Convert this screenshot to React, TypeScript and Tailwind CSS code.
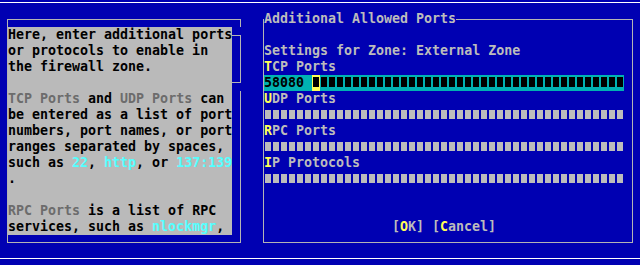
import React from 'react';

const FIELD_CELLS = 45;

const Gray: React.FC<{ children: React.ReactNode }> = ({ children }) => (
  <span className="text-[#6c6c6c]">{children}</span>
);

const Cyan: React.FC<{ children: React.ReactNode }> = ({ children }) => (
  <span className="text-[#55ffff]">{children}</span>
);

const Hot: React.FC<{ children: React.ReactNode }> = ({ children }) => (
  <span className="text-[#ffff55]">{children}</span>
);

const Row: React.FC<{ children?: React.ReactNode; className?: string }> = ({ children, className = '' }) => (
  <div className={`h-4 leading-4 whitespace-pre ${className}`}>{children}</div>
);

// empty input line drawn as a strip of small gray blocks
const EmptyField: React.FC = () => (
  <div className="h-4 flex">
    {Array.from({ length: FIELD_CELLS }).map((_, i) => (
      <div key={i} className="w-2 h-4 pl-px pt-[3px]">
        <div className="w-[6px] h-[9px] bg-[#bcbcbc]" />
      </div>
    ))}
  </div>
);

// focused input: teal strip, value, cursor, black blocks
const ActiveField: React.FC<{ value: string }> = ({ value }) => {
  const rest = FIELD_CELLS - value.length - 2;
  return (
    <div className="h-4 w-[360px] flex bg-[#00b2b2] text-black leading-4">
      <span className="whitespace-pre">{value + ' '}</span>
      <div className="w-2 h-4 bg-[#ffff55] pl-px pt-[2px]">
        <div className="w-[6px] h-[10px] bg-black" />
      </div>
      {Array.from({ length: rest }).map((_, i) => (
        <div key={i} className="w-2 h-4 pl-px pt-[2px]">
          <div className="w-[6px] h-[10px] bg-black" />
        </div>
      ))}
    </div>
  );
};

const HelpPanel: React.FC = () => (
  <div className="w-[234px] h-[224px] border-l border-t border-b border-[#b4b4b4] flex">
    <div className="w-[224px] pt-[7px]">
      <div className="bg-[#bababa] text-black">
        <Row>Here, enter additional ports</Row>
        <Row>or protocols to enable in</Row>
        <Row>the firewall zone.</Row>
        <Row />
        <Row>
          <Gray>TCP Ports</Gray> and <Gray>UDP Ports</Gray> can
        </Row>
        <Row>be entered as a list of port</Row>
        <Row>numbers, port names, or port</Row>
        <Row>ranges separated by spaces,</Row>
        <Row>
          such as <Cyan>22</Cyan>, <Cyan>http</Cyan>, or <Cyan>137:139</Cyan>
        </Row>
        <Row>.</Row>
        <Row />
        <Row>
          <Gray>RPC Ports</Gray> is a list of RPC
        </Row>
        <Row>
          services, such as <Cyan>nlockmgr</Cyan>,
        </Row>
      </div>
    </div>
    {/* scrollbar */}
    <div className="w-[9px] flex flex-col">
      <div className="h-[7px] border-r border-[#b4b4b4]" />
      <div className="h-2" />
      <div className="h-px bg-[#b4b4b4]" />
      <div className="h-[46px] border-r border-[#b4b4b4]" />
      <div className="h-px bg-[#b4b4b4]" />
      <div className="h-2" />
      <div className="flex-1 border-r border-[#b4b4b4]" />
    </div>
  </div>
);

const PortsPanel: React.FC = () => (
  <div className="w-[370px] h-[224px] border border-[#b4b4b4] flex flex-col text-[#bcbcbc]">
    <div className="-mt-[9px] h-4 leading-4 flex">
      <span className="bg-[#0000b2] whitespace-pre">Additional Allowed Ports</span>
    </div>
    <Row />
    <Row>Settings for Zone: External Zone</Row>
    <Row>
      <Hot>T</Hot>CP Ports
    </Row>
    <ActiveField value="58080" />
    <Row>
      <Hot>U</Hot>DP Ports
    </Row>
    <EmptyField />
    <Row>
      <Hot>R</Hot>PC Ports
    </Row>
    <EmptyField />
    <Row>
      <Hot>I</Hot>P Protocols
    </Row>
    <EmptyField />
    <Row />
    <Row />
    <Row className="pl-[128px]">
      [<Hot>O</Hot>K] [<Hot>C</Hot>ancel]
    </Row>
  </div>
);

export default function App() {
  return (
    <div
      className="w-[640px] h-[265px] bg-[#0000b2] overflow-hidden flex flex-col font-bold text-[13.3px]"
      style={{ fontFamily: '"DejaVu Sans Mono", "Liberation Mono", monospace' }}
    >
      <div className="mt-[2px] h-px bg-white" />
      <div className="mt-4 pl-[7px] flex gap-[22px]">
        <HelpPanel />
        <PortsPanel />
      </div>
      <div className="mt-[15px] h-px bg-white" />
    </div>
  );
}
